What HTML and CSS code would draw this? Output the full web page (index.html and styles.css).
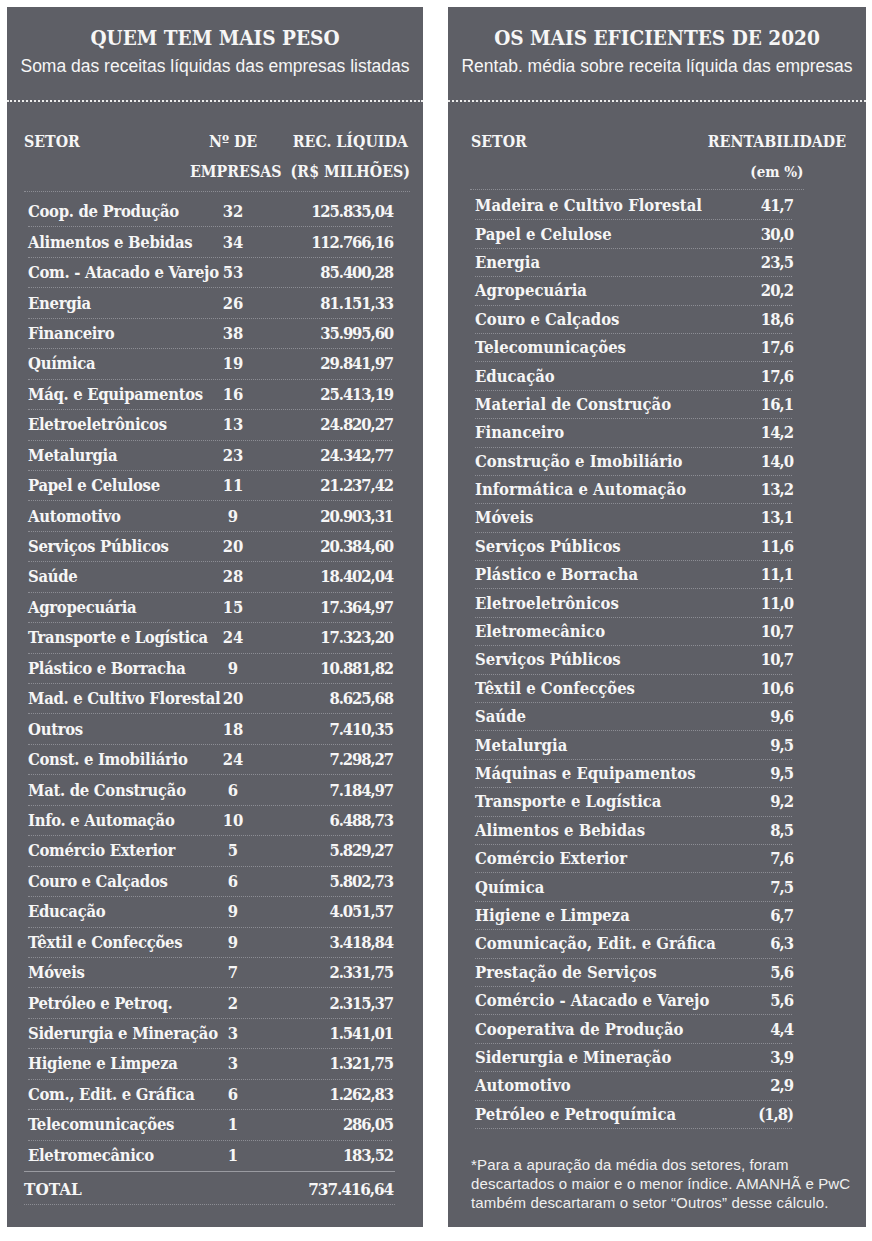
FILE: index.html
```html
<!DOCTYPE html>
<html lang="pt-BR">
<head>
<meta charset="utf-8">
<title>Setores</title>
<link rel="stylesheet" href="styles.css">
</head>
<body>
<div class="page">
  <section class="panel panel-left">
    <header class="panel-head">
      <h1 class="title">QUEM TEM MAIS PESO</h1>
      <p class="subtitle">Soma das receitas líquidas das empresas listadas</p>
    </header>
    <div class="dots"></div>
    <div class="thead thead-left">
      <div class="th th-name">SETOR</div>
      <div class="th th-count">Nº DE<br>EMPRESAS</div>
      <div class="th th-value">REC. LÍQUIDA<br>(R$ MILHÕES)</div>
    </div>
    <div class="rows rows-left">
      <div class="row"><span class="name">Coop. de Produção</span><span class="count">32</span><span class="value">125.835,04</span></div>
      <div class="row"><span class="name">Alimentos e Bebidas</span><span class="count">34</span><span class="value">112.766,16</span></div>
      <div class="row"><span class="name">Com. - Atacado e Varejo</span><span class="count">53</span><span class="value">85.400,28</span></div>
      <div class="row"><span class="name">Energia</span><span class="count">26</span><span class="value">81.151,33</span></div>
      <div class="row"><span class="name">Financeiro</span><span class="count">38</span><span class="value">35.995,60</span></div>
      <div class="row"><span class="name">Química</span><span class="count">19</span><span class="value">29.841,97</span></div>
      <div class="row"><span class="name">Máq. e Equipamentos</span><span class="count">16</span><span class="value">25.413,19</span></div>
      <div class="row"><span class="name">Eletroeletrônicos</span><span class="count">13</span><span class="value">24.820,27</span></div>
      <div class="row"><span class="name">Metalurgia</span><span class="count">23</span><span class="value">24.342,77</span></div>
      <div class="row"><span class="name">Papel e Celulose</span><span class="count">11</span><span class="value">21.237,42</span></div>
      <div class="row"><span class="name">Automotivo</span><span class="count">9</span><span class="value">20.903,31</span></div>
      <div class="row"><span class="name">Serviços Públicos</span><span class="count">20</span><span class="value">20.384,60</span></div>
      <div class="row"><span class="name">Saúde</span><span class="count">28</span><span class="value">18.402,04</span></div>
      <div class="row"><span class="name">Agropecuária</span><span class="count">15</span><span class="value">17.364,97</span></div>
      <div class="row"><span class="name">Transporte e Logística</span><span class="count">24</span><span class="value">17.323,20</span></div>
      <div class="row"><span class="name">Plástico e Borracha</span><span class="count">9</span><span class="value">10.881,82</span></div>
      <div class="row"><span class="name">Mad. e Cultivo Florestal</span><span class="count">20</span><span class="value">8.625,68</span></div>
      <div class="row"><span class="name">Outros</span><span class="count">18</span><span class="value">7.410,35</span></div>
      <div class="row"><span class="name">Const. e Imobiliário</span><span class="count">24</span><span class="value">7.298,27</span></div>
      <div class="row"><span class="name">Mat. de Construção</span><span class="count">6</span><span class="value">7.184,97</span></div>
      <div class="row"><span class="name">Info. e Automação</span><span class="count">10</span><span class="value">6.488,73</span></div>
      <div class="row"><span class="name">Comércio Exterior</span><span class="count">5</span><span class="value">5.829,27</span></div>
      <div class="row"><span class="name">Couro e Calçados</span><span class="count">6</span><span class="value">5.802,73</span></div>
      <div class="row"><span class="name">Educação</span><span class="count">9</span><span class="value">4.051,57</span></div>
      <div class="row"><span class="name">Têxtil e Confecções</span><span class="count">9</span><span class="value">3.418,84</span></div>
      <div class="row"><span class="name">Móveis</span><span class="count">7</span><span class="value">2.331,75</span></div>
      <div class="row"><span class="name">Petróleo e Petroq.</span><span class="count">2</span><span class="value">2.315,37</span></div>
      <div class="row"><span class="name">Siderurgia e Mineração</span><span class="count">3</span><span class="value">1.541,01</span></div>
      <div class="row"><span class="name">Higiene e Limpeza</span><span class="count">3</span><span class="value">1.321,75</span></div>
      <div class="row"><span class="name">Com., Edit. e Gráfica</span><span class="count">6</span><span class="value">1.262,83</span></div>
      <div class="row"><span class="name">Telecomunicações</span><span class="count">1</span><span class="value">286,05</span></div>
      <div class="row row-last"><span class="name">Eletromecânico</span><span class="count">1</span><span class="value">183,52</span></div>
    </div>
    <div class="total">
      <span class="total-label">TOTAL</span>
      <span class="value total-value">737.416,64</span>
    </div>
  </section>

  <section class="panel panel-right">
    <header class="panel-head">
      <h1 class="title">OS MAIS EFICIENTES DE 2020</h1>
      <p class="subtitle">Rentab. média sobre receita líquida das empresas</p>
    </header>
    <div class="dots"></div>
    <div class="thead thead-right">
      <div class="th th-name">SETOR</div>
      <div class="th th-rent">RENTABILIDADE<br><span class="th-unit">(em %)</span></div>
    </div>
    <div class="head-sep"></div>
    <div class="rows rows-right">
      <div class="row"><span class="name">Madeira e Cultivo Florestal</span><span class="value">41,7</span></div>
      <div class="row"><span class="name">Papel e Celulose</span><span class="value">30,0</span></div>
      <div class="row"><span class="name">Energia</span><span class="value">23,5</span></div>
      <div class="row"><span class="name">Agropecuária</span><span class="value">20,2</span></div>
      <div class="row"><span class="name">Couro e Calçados</span><span class="value">18,6</span></div>
      <div class="row"><span class="name">Telecomunicações</span><span class="value">17,6</span></div>
      <div class="row"><span class="name">Educação</span><span class="value">17,6</span></div>
      <div class="row"><span class="name">Material de Construção</span><span class="value">16,1</span></div>
      <div class="row"><span class="name">Financeiro</span><span class="value">14,2</span></div>
      <div class="row"><span class="name">Construção e Imobiliário</span><span class="value">14,0</span></div>
      <div class="row"><span class="name">Informática e Automação</span><span class="value">13,2</span></div>
      <div class="row"><span class="name">Móveis</span><span class="value">13,1</span></div>
      <div class="row"><span class="name">Serviços Públicos</span><span class="value">11,6</span></div>
      <div class="row"><span class="name">Plástico e Borracha</span><span class="value">11,1</span></div>
      <div class="row"><span class="name">Eletroeletrônicos</span><span class="value">11,0</span></div>
      <div class="row"><span class="name">Eletromecânico</span><span class="value">10,7</span></div>
      <div class="row"><span class="name">Serviços Públicos</span><span class="value">10,7</span></div>
      <div class="row"><span class="name">Têxtil e Confecções</span><span class="value">10,6</span></div>
      <div class="row"><span class="name">Saúde</span><span class="value">9,6</span></div>
      <div class="row"><span class="name">Metalurgia</span><span class="value">9,5</span></div>
      <div class="row"><span class="name">Máquinas e Equipamentos</span><span class="value">9,5</span></div>
      <div class="row"><span class="name">Transporte e Logística</span><span class="value">9,2</span></div>
      <div class="row"><span class="name">Alimentos e Bebidas</span><span class="value">8,5</span></div>
      <div class="row"><span class="name">Comércio Exterior</span><span class="value">7,6</span></div>
      <div class="row"><span class="name">Química</span><span class="value">7,5</span></div>
      <div class="row"><span class="name">Higiene e Limpeza</span><span class="value">6,7</span></div>
      <div class="row"><span class="name">Comunicação, Edit. e Gráfica</span><span class="value">6,3</span></div>
      <div class="row"><span class="name">Prestação de Serviços</span><span class="value">5,6</span></div>
      <div class="row"><span class="name">Comércio - Atacado e Varejo</span><span class="value">5,6</span></div>
      <div class="row"><span class="name">Cooperativa de Produção</span><span class="value">4,4</span></div>
      <div class="row"><span class="name">Siderurgia e Mineração</span><span class="value">3,9</span></div>
      <div class="row"><span class="name">Automotivo</span><span class="value">2,9</span></div>
      <div class="row"><span class="name">Petróleo e Petroquímica</span><span class="value">(1,8)</span></div>
    </div>
    <p class="note">*Para a apuração da média dos setores, foram<br>descartados o maior e o menor índice. AMANHÃ e PwC<br>também descartaram o setor “Outros” desse cálculo.</p>
  </section>
</div>
</body>
</html>
```

FILE: styles.css
```css
html, body {
  margin: 0;
  padding: 0;
  background: #ffffff;
}

.page {
  display: grid;
  grid-template-columns: 416px 418px;
  column-gap: 25px;
  padding: 7px 0 0 7px;
  align-items: start;
}

.panel {
  background: #5e5f66;
  color: #f6f6f6;
  height: 1220px;
  box-sizing: border-box;
  font-family: "DejaVu Serif Condensed", "DejaVu Serif", serif;
  font-weight: bold;
}

.panel-head {
  text-align: center;
  padding-top: 19px;
}

.title {
  margin: 0;
  font-size: 20.6px;
  line-height: 25px;
  font-weight: bold;
}

.subtitle {
  margin: 5px 0 0;
  font-family: "Liberation Sans", Arial, sans-serif;
  font-weight: normal;
  font-size: 17.5px;
  line-height: 21px;
}

.dots {
  margin-top: 23px;
  border-top: 2px dotted #ececec;
}

.thead {
  display: grid;
  margin-top: 25px;
  font-size: 15.8px;
  line-height: 30px;
  white-space: nowrap;
}

.thead-left {
  grid-template-columns: 166px 86px 1fr;
  margin-left: 17px;
  margin-right: 13px;
  padding-bottom: 4px;
  border-bottom: 1px dotted #8c8d94;
}

.th-count, .th-value, .th-rent {
  text-align: center;
}

.th-value {
  justify-self: end;
}

.thead-right {
  grid-template-columns: 1fr auto;
  margin-left: 23px;
  margin-right: 20px;
  padding-bottom: 2px;
}

.th-unit {
  font-size: 15px;
}

.head-sep {
  margin-left: 22px;
  width: 334px;
  border-bottom: 1px dotted #8c8d94;
}

.rows {
  font-size: 16.5px;
}

.row {
  display: grid;
  align-items: center;
  box-sizing: border-box;
  border-bottom: 1px dotted #8c8d94;
  white-space: nowrap;
}

.rows-left {
  margin: 5px 31px 0 21px;
}

.rows-left .name {
  letter-spacing: -0.3px;
}

.rows-left .row {
  grid-template-columns: 190px 30px 1fr;
  height: 30.45px;
}

.rows-left .row-last {
  border-bottom: none;
}

.rows-left .count {
  text-align: center;
}

.value {
  text-align: right;
  letter-spacing: -1.1px;
  margin-right: -1.1px;
}

.rows-right {
  margin: 2px 74px 0 27px;
}

.rows-right .row {
  grid-template-columns: 1fr auto;
  height: 28.4px;
}

.rows-right .value {
  letter-spacing: -1px;
  margin-right: -1px;
}

.total {
  display: flex;
  justify-content: space-between;
  align-items: center;
  margin: 0 28px 0 17px;
  height: 34px;
  box-sizing: border-box;
  padding: 1px 3px 0 0;
  border-top: 1px solid #9a9ba1;
  border-bottom: 1px dotted #8c8d94;
  font-size: 17px;
}

.note {
  margin: 26px 0 0 23px;
  font-family: "Liberation Sans", Arial, sans-serif;
  font-weight: normal;
  font-size: 15px;
  letter-spacing: 0.15px;
  line-height: 19px;
  color: #f0f0f0;
  white-space: nowrap;
}
```
